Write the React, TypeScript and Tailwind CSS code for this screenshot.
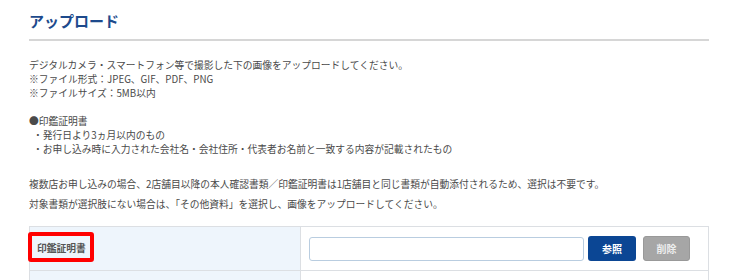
const notes = [
  "デジタルカメラ・スマートフォン等で撮影した下の画像をアップロードしてください。",
  "※ファイル形式：JPEG、GIF、PDF、PNG",
  "※ファイルサイズ：5MB以内",
];

const requirements = [
  "・発行日より3ヵ月以内のもの",
  "・お申し込み時に入力された会社名・会社住所・代表者お名前と一致する内容が記載されたもの",
];

function UploadRow({ label, highlight }: { label: string; highlight?: boolean }) {
  return (
    <div className="flex border-b border-[#dcdfe3]">
      <div className="relative flex w-[271px] shrink-0 items-center bg-[#eef5fc] pl-[7px] border-r border-[#dcdfe3]">
        <span className="text-[9.75px] font-bold text-[#555]">{label}</span>
        {highlight && (
          <div className="pointer-events-none absolute left-[-2px] top-[5px] h-[30px] w-[66px] rounded-[3px] border-[4px] border-[#ff0000]" />
        )}
      </div>
      <div className="flex flex-1 items-center py-[9px] pl-[8px]">
        <input
          type="text"
          className="h-[24px] w-[275px] rounded-[3px] border border-[#b9cde0] bg-white outline-none"
        />
        <button className="ml-[4px] h-[25px] w-[48px] rounded-[3px] bg-[#0b4694] text-[10px] font-bold text-white">
          参照
        </button>
        <button className="ml-[7px] h-[25px] w-[47px] rounded-[3px] border border-[#999] bg-[#a6a6a6] text-[10px] font-bold text-[#eee]">
          削除
        </button>
      </div>
    </div>
  );
}

export default function App() {
  return (
    <div className="h-[280px] w-[739px] overflow-hidden bg-white font-['Noto_Sans_CJK_JP',sans-serif] text-[#4a4a4a]">
      <div className="ml-[29px] w-[680px]">
        <h1 className="border-b-2 border-[#d6d6d6] pt-[11px] pb-[8px] text-[15px] font-bold leading-[20px] text-[#1d4a8c]">
          アップロード
        </h1>

        <div className="mt-[17px] text-[9.75px] leading-[14px]">
          {notes.map((n) => (
            <p key={n}>{n}</p>
          ))}
          <p className="h-[14px]" />
          <p>●印鑑証明書</p>
          {requirements.map((r) => (
            <p key={r} className="pl-[4px]">
              {r}
            </p>
          ))}
        </div>

        <div className="mt-[18px] text-[9.75px] leading-[20px]">
          <p>
            複数店お申し込みの場合、2店舗目以降の本人確認書類／印鑑証明書は1店舗目と同じ書類が自動添付されるため、選択は不要です。
          </p>
          <p>対象書類が選択肢にない場合は、「その他資料」を選択し、画像をアップロードしてください。</p>
        </div>

        <div className="mt-[12px] border-x border-t border-[#dcdfe3]">
          <UploadRow label="印鑑証明書" highlight />
          <div className="flex h-[20px]">
            <div className="w-[271px] shrink-0 bg-[#eef5fc] border-r border-[#dcdfe3]" />
            <div className="flex-1" />
          </div>
        </div>
      </div>
    </div>
  );
}
